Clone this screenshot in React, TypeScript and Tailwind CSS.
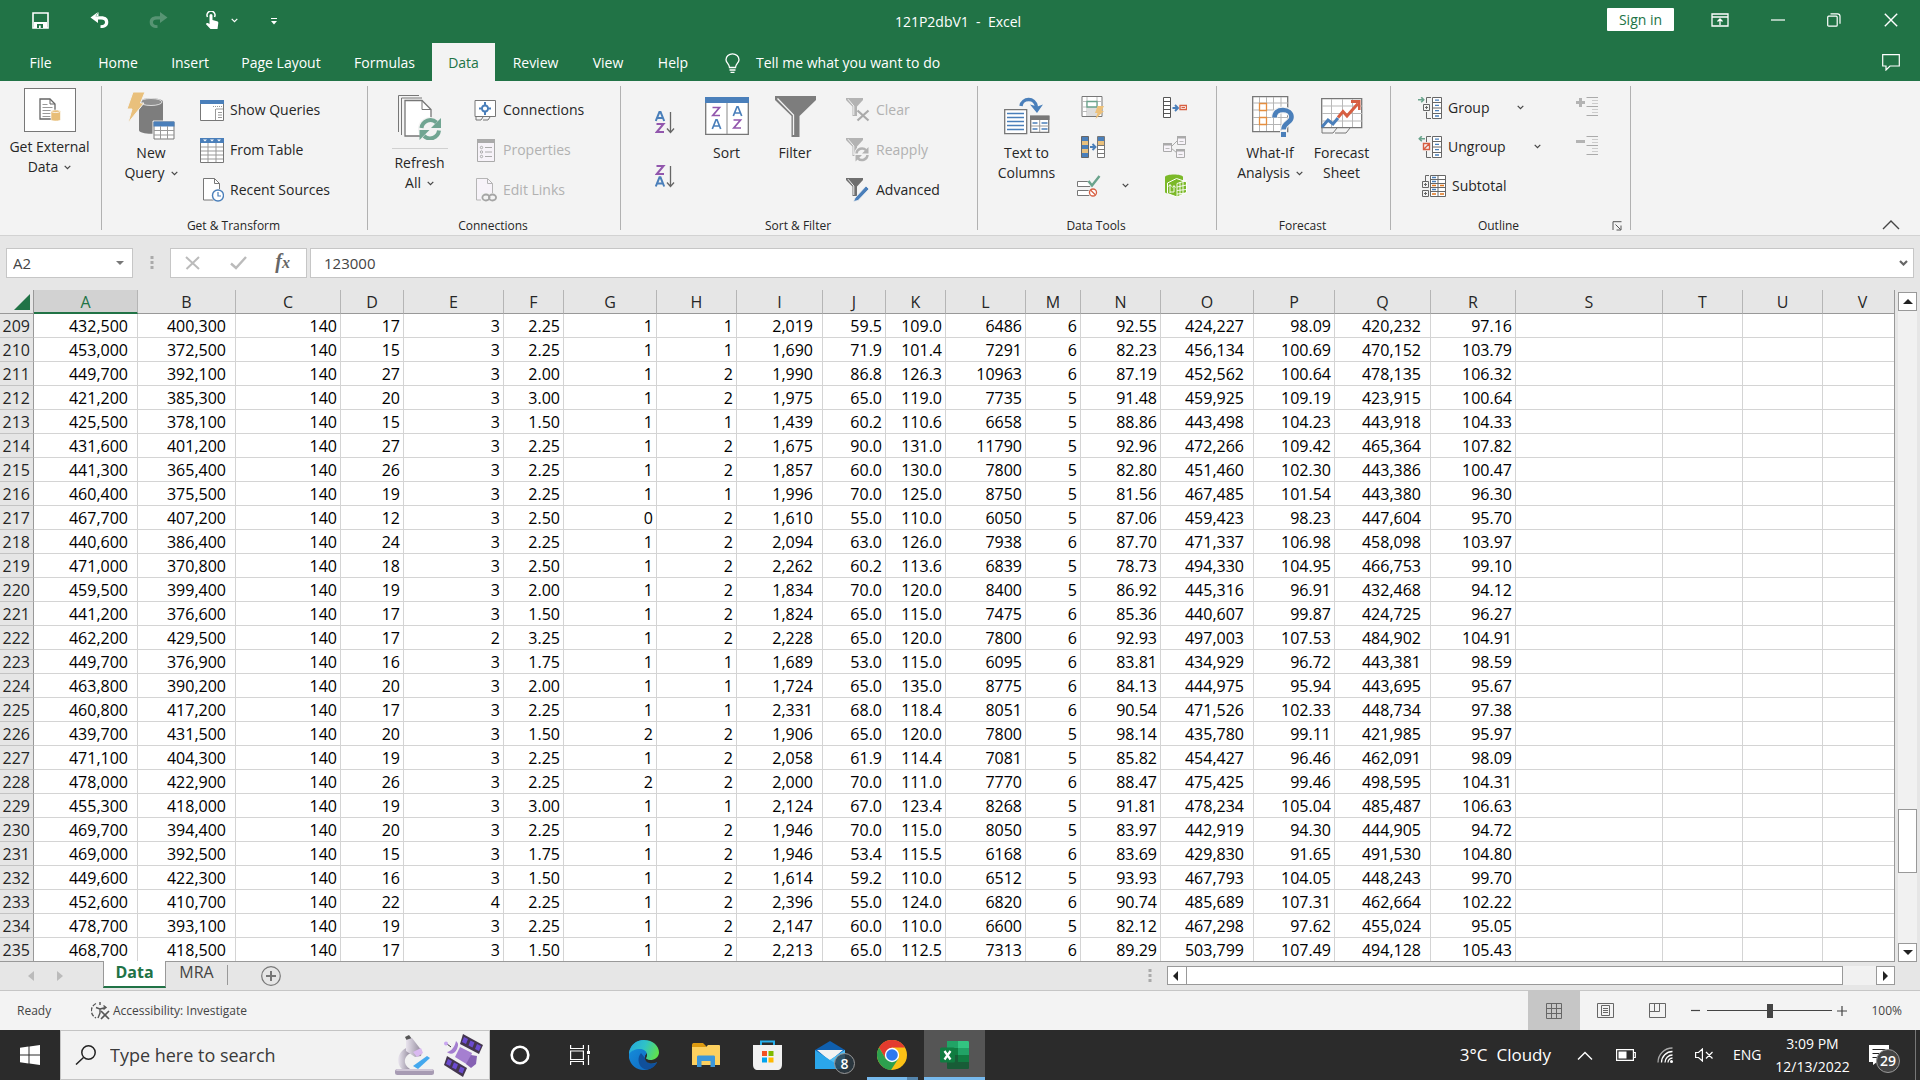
import React from "react";

type Kids = { children?: React.ReactNode };

/* ------------------------------------------------------------------ data */

const COLUMNS: { name: string; width?: number; comma?: boolean }[] = [
  { name: "A", width: 104, comma: true },
  { name: "B", width: 98, comma: true },
  { name: "C", width: 105 },
  { name: "D", width: 63 },
  { name: "E", width: 100 },
  { name: "F", width: 60 },
  { name: "G", width: 93 },
  { name: "H", width: 80 },
  { name: "I", width: 86, comma: true },
  { name: "J", width: 63 },
  { name: "K", width: 60 },
  { name: "L", width: 80 },
  { name: "M", width: 55 },
  { name: "N", width: 80 },
  { name: "O", width: 93, comma: true },
  { name: "P", width: 81 },
  { name: "Q", width: 96, comma: true },
  { name: "R", width: 85 },
  { name: "S", width: 147 },
  { name: "T", width: 80 },
  { name: "U", width: 80 },
  { name: "V" },
];

const ROWS = `209 432,500 400,300 140 17 3 2.25 1 1 2,019 59.5 109.0 6486 6 92.55 424,227 98.09 420,232 97.16
210 453,000 372,500 140 15 3 2.25 1 1 1,690 71.9 101.4 7291 6 82.23 456,134 100.69 470,152 103.79
211 449,700 392,100 140 27 3 2.00 1 2 1,990 86.8 126.3 10963 6 87.19 452,562 100.64 478,135 106.32
212 421,200 385,300 140 20 3 3.00 1 2 1,975 65.0 119.0 7735 5 91.48 459,925 109.19 423,915 100.64
213 425,500 378,100 140 15 3 1.50 1 1 1,439 60.2 110.6 6658 5 88.86 443,498 104.23 443,918 104.33
214 431,600 401,200 140 27 3 2.25 1 2 1,675 90.0 131.0 11790 5 92.96 472,266 109.42 465,364 107.82
215 441,300 365,400 140 26 3 2.25 1 2 1,857 60.0 130.0 7800 5 82.80 451,460 102.30 443,386 100.47
216 460,400 375,500 140 19 3 2.25 1 1 1,996 70.0 125.0 8750 5 81.56 467,485 101.54 443,380 96.30
217 467,700 407,200 140 12 3 2.50 0 2 1,610 55.0 110.0 6050 5 87.06 459,423 98.23 447,604 95.70
218 440,600 386,400 140 24 3 2.25 1 2 2,094 63.0 126.0 7938 6 87.70 471,337 106.98 458,098 103.97
219 471,000 370,800 140 18 3 2.50 1 2 2,262 60.2 113.6 6839 5 78.73 494,330 104.95 466,753 99.10
220 459,500 399,400 140 19 3 2.00 1 2 1,834 70.0 120.0 8400 5 86.92 445,316 96.91 432,468 94.12
221 441,200 376,600 140 17 3 1.50 1 2 1,824 65.0 115.0 7475 6 85.36 440,607 99.87 424,725 96.27
222 462,200 429,500 140 17 2 3.25 1 2 2,228 65.0 120.0 7800 6 92.93 497,003 107.53 484,902 104.91
223 449,700 376,900 140 16 3 1.75 1 1 1,689 53.0 115.0 6095 6 83.81 434,929 96.72 443,381 98.59
224 463,800 390,200 140 20 3 2.00 1 1 1,724 65.0 135.0 8775 6 84.13 444,975 95.94 443,695 95.67
225 460,800 417,200 140 17 3 2.25 1 1 2,331 68.0 118.4 8051 6 90.54 471,526 102.33 448,734 97.38
226 439,700 431,500 140 20 3 1.50 2 2 1,906 65.0 120.0 7800 5 98.14 435,780 99.11 421,985 95.97
227 471,100 404,300 140 19 3 2.25 1 2 2,058 61.9 114.4 7081 5 85.82 454,427 96.46 462,091 98.09
228 478,000 422,900 140 26 3 2.25 2 2 2,000 70.0 111.0 7770 6 88.47 475,425 99.46 498,595 104.31
229 455,300 418,000 140 19 3 3.00 1 1 2,124 67.0 123.4 8268 5 91.81 478,234 105.04 485,487 106.63
230 469,700 394,400 140 20 3 2.25 1 2 1,946 70.0 115.0 8050 5 83.97 442,919 94.30 444,905 94.72
231 469,000 392,500 140 15 3 1.75 1 2 1,946 53.4 115.5 6168 6 83.69 429,830 91.65 491,530 104.80
232 449,600 422,300 140 16 3 1.50 1 2 1,614 59.2 110.0 6512 5 93.93 467,793 104.05 448,243 99.70
233 452,600 410,700 140 22 4 2.25 1 2 2,396 55.0 124.0 6820 6 90.74 485,689 107.31 462,664 102.22
234 478,700 393,100 140 19 3 2.25 1 2 2,147 60.0 110.0 6600 5 82.12 467,298 97.62 455,024 95.05
235 468,700 418,500 140 17 3 1.50 1 2 2,213 65.0 112.5 7313 6 89.29 503,799 107.49 494,128 105.43`
  .split("\n")
  .map((line) => line.split(" "));

/* ----------------------------------------------------------------- icons */

function Svg({ w, h, children }: Kids & { w: number; h: number }) {
  return (
    <svg width={w} height={h} viewBox={`0 0 ${w} ${h}`} fill="none" className="block shrink-0" aria-hidden="true">
      {children}
    </svg>
  );
}

const Chevron = () => (
  <Svg w={7} h={5}>
    <path d="M.7 .8 3.5 3.6 6.3 .8" stroke="#444" strokeWidth="1.2" />
  </Svg>
);

const SaveIcon = () => (
  <Svg w={17} h={17}>
    <path d="M1 1h15v15H1z" stroke="#fff" strokeWidth="1.6" />
    <path d="M2 10h13v6H2z" fill="#fff" />
    <path d="M5 12h6v4H8.700v-2.500H7V16H5z" fill="#217346" />
  </Svg>
);

const UndoIcon = () => (
  <Svg w={19} h={16}>
    <path d="M8 0 0.500 5.500 8 11V7.500h3c3 0 4 1.200 4 2.800 0 1.800-1.300 3-4.500 3V16c5 0 7.800-2 7.800-6 0-3.700-2.700-5.800-7-5.800H5.500z" fill="#fff" />
    <path d="M8.500 0v4H6z" fill="#fff" />
  </Svg>
);

const RedoIcon = () => (
  <Svg w={19} h={16}>
    <path d="M11 0l7.500 5.500L11 11V7.500H8c-3 0-4 1.200-4 2.800 0 1.800 1.300 3 4.500 3V16C3.500 16 .7 14 .7 10c0-3.700 2.700-5.800 7-5.800H11z" fill="#579473" />
  </Svg>
);

const TouchIcon = () => (
  <Svg w={14} h={18}>
    <path d="M2.500 6a4 4 0 1 1 7 0" stroke="#fff" strokeWidth="1.5" />
    <path d="M4.500 4.500a1.500 1.500 0 0 1 3 0V9l4.500 1.200c1 .3 1.500 1 1.300 2L12.500 18H5.500L1 13.200c.2-1.200 1.300-1.600 2.300-.9l1.200.8z" fill="#fff" />
  </Svg>
);

const GetDataIcon = () => (
  <Svg w={22} h={24}>
    <path d="M1 1h10l5 5v15H1z" stroke="#666" strokeWidth="1.3" fill="#fff" />
    <path d="M11 1v5h5" stroke="#666" />
    <path d="M3.500 6.500h5M3.500 9.500h10M3.500 12.500h8M3.500 15.500h8M3.500 18.500h8" stroke="#999" />
    <path d="M12 13.500c0-2 9.500-2 9.500 0v8c0 2-9.500 2-9.500 0z" fill="#e8be78" stroke="#fff" strokeWidth=".6" />
    <path d="M12.500 13.500c1 1.400 7.500 1.400 8.500 0" stroke="#fff" strokeWidth=".8" />
  </Svg>
);

const NewQueryIcon = () => (
  <Svg w={48} h={48}>
    <path d="M12 10c0-5 24-5 24 0v28c0 5-24 5-24 0z" fill="#7d7d7d" />
    <ellipse cx="24" cy="10" rx="11" ry="3.500" fill="#8f8f8f" stroke="#f3f3f3" strokeWidth=".8" />
    <path d="M6 0h12l-4.500 11H17L1 31l4-14H0z" fill="#e9c07c" stroke="#f3f3f3" />
    <path d="M26 29h22v19H26z" fill="#fff" stroke="#f3f3f3" />
    <path d="M27 30h20v17H27z" stroke="#777" fill="#fff" />
    <path d="M26.500 29.500h21v5h-21z" fill="#4a7fba" />
    <path d="M33.500 34v13M40.500 34v13M27 38.500h20M27 43h20" stroke="#999" />
  </Svg>
);

const ShowQueriesIcon = () => (
  <Svg w={24} h={21}>
    <path d="M.5 .5h23v20H.5z" stroke="#777" fill="#fff" />
    <path d="M0 0h24v4H0z" fill="#4a7fba" />
    <path d="M13 6.500h9" stroke="#999" strokeDasharray="1 1" />
    <path d="M15.500 9v11M16 9h7M18 12.500h4M18 15h4M18 17.500h4" stroke="#999" />
  </Svg>
);

const FromTableIcon = () => (
  <Svg w={24} h={25}>
    <path d="M.5 .5h23v24H.5z" stroke="#777" fill="#fff" />
    <path d="M0 0h24v5H0z" fill="#4a7fba" />
    <path d="M3 1.500h4L5 3.500zM10 1.500h4l-2 2zM17 1.500h4l-2 2z" fill="#fff" />
    <path d="M8 5v19M16 5v19M1 9h22M1 13h22M1 17h22M1 21h22" stroke="#999" />
  </Svg>
);

const RecentIcon = () => (
  <Svg w={24} h={24}>
    <path d="M3.500 .5h11l5 5V22h-16z" stroke="#777" fill="#fff" />
    <path d="M14.500 .5v5h5" stroke="#777" />
    <circle cx="18" cy="17.500" r="6.700" fill="#f3f3f3" />
    <circle cx="18" cy="17.500" r="5.500" fill="#fff" stroke="#4a7fba" strokeWidth="1.400" />
    <path d="M18 14v4h3" stroke="#4a7fba" strokeWidth="1.200" />
  </Svg>
);

const RefreshIcon = () => (
  <Svg w={46} h={46}>
    <path d="M1.500 38V1.500H22M4.500 41V4H25" stroke="#777" />
    <path d="M8 6.500h17l9 9V42H8z" fill="#fff" stroke="#777" strokeWidth="1.300" />
    <path d="M25 6.500v9h9" stroke="#777" />
    <circle cx="33" cy="35" r="12" fill="#f3f3f3" />
    <path d="M24.500 34a9 9 0 0 1 15-5.500" stroke="#71a592" strokeWidth="4" />
    <path d="M44 24v10H34z" fill="#71a592" />
    <path d="M42 36.500a9 9 0 0 1-15 5.500" stroke="#71a592" strokeWidth="4" />
    <path d="M22.500 46V36h10z" fill="#71a592" />
  </Svg>
);

const ConnectionsIcon = () => (
  <Svg w={23} h={21}>
    <path d="M2 16v4h5l2-3M9 20h5l2-3" stroke="#777" />
    <path d="M1 .5h20.500v16H1z" stroke="#777" fill="#fff" />
    <circle cx="11" cy="8.500" r="3" stroke="#4a7fba" strokeWidth="1.800" />
    <path d="M11 2v3.500M11 11.500V15M5 8.500h3.500M13.500 8.500H17" stroke="#4a7fba" strokeWidth="2" />
  </Svg>
);

const PropertiesIcon = () => (
  <Svg w={21} h={23}>
    <path d="M2.500 .5h17v22h-17z" stroke="#aaa" fill="#f7f3f9" />
    <path d="M2 0h18v4H2z" fill="#aaa" />
    <circle cx="6.500" cy="8.500" r="1.200" stroke="#aaa" />
    <circle cx="6.500" cy="13" r="1.200" stroke="#aaa" />
    <circle cx="6.500" cy="17.500" r="1.200" stroke="#aaa" />
    <path d="M10 8.500h7M10 13h7M10 17.500h7" stroke="#aaa" />
  </Svg>
);

const EditLinksIcon = () => (
  <Svg w={23} h={24}>
    <path d="M2.500 .5h11l5 5V22h-16z" stroke="#b5b5b5" fill="#f7f3f9" />
    <path d="M13.500 .5v5h5" stroke="#b5b5b5" />
    <path d="M7 15h16v9H7z" fill="#f3f3f3" />
    <ellipse cx="12" cy="19.500" rx="3.600" ry="3" stroke="#a5a5a5" strokeWidth="1.800" />
    <ellipse cx="18.500" cy="19.500" rx="3.600" ry="3" stroke="#a5a5a5" strokeWidth="1.800" />
  </Svg>
);

const LetterA = ({ x, y, color = "#4a7fba", w = 2 }: { x: number; y: number; color?: string; w?: number }) => (
  <g transform={`translate(${x} ${y})`} stroke={color} strokeWidth={w}>
    <path d="M.8 10 4.500 .8h1L9.200 10M2.300 7h5.400" />
  </g>
);
const LetterZ = ({ x, y, color = "#9257ad", w = 2 }: { x: number; y: number; color?: string; w?: number }) => (
  <g transform={`translate(${x} ${y})`} stroke={color} strokeWidth={w}>
    <path d="M1 1h7L1.300 9H8.500" />
  </g>
);
const SortAZIcon = () => (
  <Svg w={20} h={23}>
    <LetterA x={0} y={0} />
    <LetterZ x={0.5} y={12} />
    <path d="M15.500 1v20M12 17.500l3.500 4 3.500-4" stroke="#666" strokeWidth="1.300" />
  </Svg>
);
const SortZAIcon = () => (
  <Svg w={20} h={23}>
    <LetterZ x={0.5} y={0} />
    <LetterA x={0} y={11.5} />
    <path d="M15.500 1v20M12 17.500l3.500 4 3.500-4" stroke="#666" strokeWidth="1.300" />
  </Svg>
);
const SortIcon = () => (
  <Svg w={44} h={38}>
    <path d="M.7 .7h42.600v36.600H.7z" fill="#fff" stroke="#777" strokeWidth="1.300" />
    <path d="M0 0h44v6H0z" fill="#4a7fba" />
    <path d="M22 6v31" stroke="#888" />
    <LetterZ x={6.5} y={9.5} w={1.7} />
    <LetterA x={6.5} y={22} w={1.7} />
    <LetterA x={27.5} y={9} w={1.7} />
    <LetterZ x={27.5} y={22} w={1.7} />
  </Svg>
);
const FilterIcon = () => (
  <Svg w={41} h={41}>
    <path d="M0 0h41v4L24.500 20v21h-8V20L0 4z" fill="#7d7d7d" />
    <path d="M2.500 2.500 18.500 19v20" stroke="#f3f3f3" strokeWidth="1.300" />
  </Svg>
);
const SmallFunnel = ({ color }: { color: string }) => (
  <>
    <path d="M0 0h17v2L11 8.500V18H6.500V8.500L0 2z" fill={color} />
    <path d="M2 1.200 7.800 8v9" stroke="#f3f3f3" />
  </>
);
const ClearIcon = () => (
  <Svg w={24} h={24}>
    <SmallFunnel color="#b3b3b3" />
    <path d="m11.500 12.500 11 10M22.500 12.500l-11 10" stroke="#aaa" strokeWidth="2.200" />
  </Svg>
);
const ReapplyIcon = () => (
  <Svg w={24} h={24}>
    <SmallFunnel color="#b3b3b3" />
    <circle cx="16" cy="16" r="7.800" fill="#f3f3f3" />
    <path d="M10.500 15.500a5.500 5.500 0 0 1 9.500-3.300M21.500 17a5.500 5.500 0 0 1-9.500 3.300" stroke="#b3b3b3" strokeWidth="2.500" />
    <path d="M22.500 9v6.500H16zM9.500 23.500V17H16z" fill="#b3b3b3" />
  </Svg>
);
const AdvancedIcon = () => (
  <Svg w={24} h={24}>
    <SmallFunnel color="#6f6f6f" />
    <path d="m9 20 11-12 3 3L12 22.500l-4.500 1z" fill="#4a7fba" stroke="#f3f3f3" strokeWidth=".8" />
  </Svg>
);

const TextToColumnsIcon = () => (
  <Svg w={46} h={38}>
    <path d="M.7 12.700h22v24H.7z" fill="#fff" stroke="#777" strokeWidth="1.300" />
    <path d="M3 16.500h17M3 20.500h17M3 24.500h17M3 28.500h17M3 32.500h17" stroke="#4a7fba" strokeWidth="1.300" />
    <path d="M26.700 19.500h18v15.800h-18z" fill="#fff" stroke="#777" strokeWidth="1.300" />
    <path d="M26 18.500h19.500V23H26z" fill="#777" />
    <path d="M35.700 23v12M27 29h18" stroke="#999" />
    <path d="M28.500 26h5M37.500 26h6M28.500 32h5M37.500 32h6" stroke="#4a7fba" strokeWidth="1.300" />
    <path d="M17 9c1-8 14-9.500 15.500 1" stroke="#4a7fba" strokeWidth="3.400" />
    <path d="M26 7.500 33 16l6-8.500-5.500 2z" fill="#4a7fba" />
  </Svg>
);
const FlashFillIcon = () => (
  <Svg w={24} h={23}>
    <path d="M1 .5h20v20H1z" fill="#fff" stroke="#777" />
    <path d="M6 1v19M16 1v19M1 5.500h20M1 11h20M1 15.500h20" stroke="#bbb" />
    <path d="M6 12h9v8H6z" fill="#ddd" />
    <path d="M6 5.500h10V11H6z" fill="#fff" stroke="#6aa38c" strokeWidth="1.300" />
    <path d="M16.500 10H23l-2.500 5H23l-8.500 8 2-6h-2.500z" fill="#edc17a" />
  </Svg>
);
const RemoveDupIcon = () => (
  <Svg w={24} h={22}>
    <path d="M.5 .5h7v21h-7z" fill="#4a7fba" stroke="#666" />
    <path d="M1 5h6v4H1zM1 13h6v4H1z" fill="#e9c07c" />
    <path d="M16.500 .5h7v21h-7z" fill="#fff" stroke="#777" />
    <path d="M17 1h6v4h-6z" fill="#4a7fba" />
    <path d="M17 5h6v4h-6z" fill="#e9c07c" />
    <path d="M17 9.500h6M17 13.500h6M17 17.500h6" stroke="#777" />
    <path d="M9 11h5M11.500 8l3 3-3 3" stroke="#4a7fba" strokeWidth="1.900" />
  </Svg>
);
const ValidationIcon = () => (
  <Svg w={24} h={22}>
    <path d="M.5 6.500h13v5H.5zM.5 15.500h13v5H.5z" fill="#fff" stroke="#777" />
    <path d="m11.500 6 3.500 4.500L22.500 1" stroke="#f3f3f3" strokeWidth="4" />
    <path d="m11.500 6 3.500 4.500L22.500 1" stroke="#6aa38c" strokeWidth="2.400" />
    <circle cx="16" cy="17.500" r="4.800" fill="#f3f3f3" />
    <circle cx="16" cy="17.500" r="3.500" stroke="#d75f42" strokeWidth="1.300" fill="#fff" />
    <path d="m13.500 15 5 5" stroke="#d75f42" strokeWidth="1.300" />
  </Svg>
);
const ConsolidateIcon = () => (
  <Svg w={24} h={21}>
    <path d="M.5 .5h7v20h-7z" fill="#fff" stroke="#555" />
    <path d="M.5 4.500h7M.5 8.500h7M.5 12.500h7M.5 16.500h7" stroke="#555" />
    <path d="M9.500 11h5M12 8l3 3-3 3" stroke="#4a7fba" strokeWidth="1.900" />
    <path d="M17 8.500h6.500v4H17z" fill="#fff" stroke="#d75f42" strokeWidth="1.300" />
    <path d="M18.500 10.500h3.500" stroke="#d75f42" />
  </Svg>
);
const RelationshipsIcon = () => (
  <Svg w={24} h={22}>
    <path d="m8 11 6-6M8 12l6 5" stroke="#aaa" />
    <path d="M.5 7.500h8v8h-8zM14.500 .5h8v8h-8zM13.500 13.500h8v8h-8z" fill="#f7f3f9" stroke="#aaa" />
    <path d="M0 7h9v2.500H0zM14 0h9v2.500h-9zM13 13h9v2.500h-9z" fill="#aaa" />
    <path d="M2.500 12.500h4M16.500 5.500h4M15.500 18.500h4" stroke="#bbb" />
  </Svg>
);
const DataModelIcon = () => (
  <Svg w={22} h={23}>
    <path d="M0 3c0-3.500 18-3.500 18 0v15c0 3-18 3-18 0z" fill="#7bb928" />
    <path d="m2.500 9 9-4.500 10 3.500v10.500L12 23l-9.500-3.500z" fill="#7bb928" stroke="#fff" />
    <path d="m12 9.500 9.500-3M12 13l9.500-2M12 16.500l9.500-1M12 20l9.500-1M15 8v13M18 7v13M12 9.500V23M5 11v8M5 18h4v-6M3.500 12.500 5 10.500l1.500 2M7.500 13.500 9 11.500l1.500 2" stroke="#fff" strokeWidth=".9" />
  </Svg>
);

const WhatIfIcon = () => (
  <Svg w={43} h={41}>
    <path d="M.7 .7h35v35h-35z" fill="#fff" stroke="#777" strokeWidth="1.300" />
    <path d="M7.500 1v34M14.500 1v34M21.500 1v34M29 1v34M1 7h35M1 14h35M1 21.500h35M1 28.500h35" stroke="#b5b5b5" />
    <path d="M7.500 7.500h7v7h-7zM7.500 21.500h7v7h-7z" stroke="#e58e3f" strokeWidth="1.300" fill="#fff" />
    <path d="M22.500 21.500c0-5 3-7.500 8.500-7.500 5 0 8.500 3 8.500 7 0 6-8 5.500-8 12" stroke="#f3f3f3" strokeWidth="7" />
    <path d="M28 34.500h7V41h-7z" fill="#f3f3f3" />
    <path d="M22.500 21.500c0-5 3-7.500 8.500-7.500 5 0 8.500 3 8.500 7 0 6-8 5.500-8 12.500" stroke="#4a7fba" strokeWidth="4.600" />
    <path d="M29 36h5v5h-5z" fill="#4a7fba" />
  </Svg>
);
const ForecastIcon = () => (
  <Svg w={42} h={36}>
    <path d="M1 30v5h11l4-5M14 35h11l4-5" stroke="#777" />
    <path d="M.7 .7h40v29h-40z" fill="#fff" stroke="#777" strokeWidth="1.300" />
    <path d="M10.500 1v28M21.500 1v28M31.500 1v28M1 8h40M1 15.500h40M1 23h40" stroke="#b9b9b9" />
    <path d="m1 29 6-7 5 4 5-6" stroke="#4a7fba" strokeWidth="3" />
    <path d="m17 19.500 5-6 4 4.500L37 5.500" stroke="#d75f42" strokeWidth="3" />
    <path d="M30 2h9.500v10h-2.500V5H30z" fill="#d75f42" />
  </Svg>
);

const OutlineIcon = ({ ungroup }: { ungroup?: boolean }) => (
  <Svg w={24} h={22}>
    <path d="M14.500 .5h9v21h-9z" fill="#fff" stroke="#666" />
    <path d="M14.500 5.500h9M14.500 11h9M14.500 16.500h9" stroke="#666" />
    <path d="M17 3.200h4M17 8.300h4M17 13.700h4M17 19h4" stroke="#4a7fba" strokeWidth="1.300" />
    <path d="M13 .5H8.500V6M8.500 15v6.500H13" stroke="#666" />
    {ungroup ? (
      <>
        <path d="M5.500 7.500h6v6h-6zM6 13l5-5" stroke="#d75f42" strokeWidth="1.400" />
        <path d="M7 2.700H1.500M3.800 .2 1.300 2.700l2.500 2.500" stroke="#6aa38c" strokeWidth="1.600" />
      </>
    ) : (
      <>
        <path d="M5.500 7.500h6v6h-6zM8.500 9v3M7 10.500h3" stroke="#666" />
        <path d="M0 2.700h5.500M3.200 .2l2.500 2.500-2.500 2.500" stroke="#6aa38c" strokeWidth="1.600" />
      </>
    )}
  </Svg>
);
const SubtotalIcon = () => (
  <Svg w={24} h={22}>
    <path d="M8.500 .5h15v21h-15z" fill="#fff" stroke="#666" />
    <path d="M8.500 4.500h15M8.500 8.500h15M8.500 12.500h15M8.500 16.500h15M16 .5v21" stroke="#666" />
    <path d="M10 2.500h4M10 6.500h4M10 14.500h4" stroke="#4a7fba" strokeWidth="1.300" />
    <path d="M10 10.500h4M18 10.500h4M10 19h4M18 19h4" stroke="#e2761b" strokeWidth="1.300" />
    <path d="M7 .5H3.500V6M.5 6.500h6v6h-6zM3.500 8v3M2 9.500h3M.5 15.500h6v6h-6zM3.500 17v3M2 18.500h3" stroke="#666" />
  </Svg>
);
const DetailIcon = ({ plus }: { plus?: boolean }) => (
  <Svg w={22} h={20}>
    <path d="M10.500 .5H22M10.500 9.500H22M10.500 18.500H22" stroke="#aaa" />
    <path d="M16 3.500h6M16 6.500h6M16 12.500h6M16 15.500h6" stroke="#ccc" />
    <path d="M0 5.500h9" stroke="#b3b3b3" strokeWidth="3" />
    {plus && <path d="M4.500 1v9" stroke="#b3b3b3" strokeWidth="3" />}
  </Svg>
);

/* ---------------------------------------------------------------- ribbon */

function Group({ label, width, launcher, children }: Kids & { label?: string; width: string; launcher?: boolean }) {
  return (
    <>
      <section className={`flex shrink-0 flex-col ${width}`}>
        <div className="flex flex-1">{children}</div>
        <div className={`relative flex h-[19px] items-center justify-center text-xs text-[#262626] ${launcher ? "pr-6" : "pr-0.5"}`}>
          {label}
          {launcher && (
            <button type="button" aria-label="Outline settings" className="absolute right-2">
              <Svg w={10} h={10}>
                <path d="M1 9V.7h8.500M3.500 3.500l5 5M9 4.500V9H4.500" stroke="#555" />
              </Svg>
            </button>
          )}
        </div>
      </section>
      <div className="my-[5px] w-px shrink-0 bg-[#b1b1b1]" />
    </>
  );
}

function BigButton({ icon, lines, width, arrow }: { icon: React.ReactNode; lines: string[]; width: string; arrow?: boolean }) {
  return (
    <button type="button" className={`flex shrink-0 flex-col items-center pt-[11px] ${width}`}>
      <span className="flex h-[51px] items-center pb-[3px]">{icon}</span>
      <Lines lines={lines} arrow={arrow} />
    </button>
  );
}

function Lines({ lines, arrow }: { lines: string[]; arrow?: boolean }) {
  return (
    <>
      {lines.map((line, i) => (
        <span key={line} className="flex h-5 items-center gap-1.5 whitespace-nowrap text-sm">
          {line}
          {arrow && i === lines.length - 1 && <Chevron />}
        </span>
      ))}
    </>
  );
}

function Item({ icon, label, disabled }: { icon: React.ReactNode; label: string; disabled?: boolean }) {
  return (
    <button
      type="button"
      disabled={disabled}
      className="flex h-10 items-center gap-1.5 whitespace-nowrap text-sm text-[#262626] disabled:text-[#b1b1b1]"
    >
      <span className="flex w-6 justify-center">{icon}</span>
      {label}
    </button>
  );
}

function Ribbon() {
  return (
    <div className="flex h-[155px] border-b border-[#d2d2d2] bg-[#f3f3f3] text-[#262626]">
      <Group width="w-[101px]">
        <button type="button" className="flex flex-1 flex-col items-center pr-0.5 pt-[7px]">
          <span className="mb-[5px] flex h-11 w-[52px] items-center justify-center border border-[#777] bg-white">
            <GetDataIcon />
          </span>
          <Lines lines={["Get External", "Data"]} arrow />
        </button>
      </Group>
      <Group label="Get & Transform" width="w-[265px]">
        <BigButton width="w-[98px]" icon={<NewQueryIcon />} lines={["New", "Query"]} arrow />
        <div className="flex flex-col items-start pt-[9px]">
          <Item icon={<ShowQueriesIcon />} label="Show Queries" />
          <Item icon={<FromTableIcon />} label="From Table" />
          <Item icon={<RecentIcon />} label="Recent Sources" />
        </div>
      </Group>
      <Group label="Connections" width="w-[252px]">
        <button type="button" className="flex w-[105px] flex-col items-center pr-0.5 pt-[13px]">
          <RefreshIcon />
          <span className="mb-1 mt-2 h-px w-14 bg-[#d0d0d0]" />
          <Lines lines={["Refresh", "All"]} arrow />
        </button>
        <div className="flex flex-col items-start pt-[9px]">
          <Item icon={<ConnectionsIcon />} label="Connections" />
          <Item icon={<PropertiesIcon />} label="Properties" disabled />
          <Item icon={<EditLinksIcon />} label="Edit Links" disabled />
        </div>
      </Group>
      <Group label="Sort & Filter" width="w-[356px]">
        <div className="flex w-[72px] flex-col items-end gap-[31px] pr-[18px] pt-[30px]">
          <button type="button" aria-label="Sort A to Z">
            <SortAZIcon />
          </button>
          <button type="button" aria-label="Sort Z to A">
            <SortZAIcon />
          </button>
        </div>
        <BigButton width="w-[67px]" icon={<SortIcon />} lines={["Sort"]} />
        <BigButton width="w-[70px]" icon={<FilterIcon />} lines={["Filter"]} />
        <div className="flex flex-col items-start pl-4 pt-[9px]">
          <Item icon={<ClearIcon />} label="Clear" disabled />
          <Item icon={<ReapplyIcon />} label="Reapply" disabled />
          <Item icon={<AdvancedIcon />} label="Advanced" />
        </div>
      </Group>
      <Group label="Data Tools" width="w-[238px]">
        <BigButton width="w-[97px]" icon={<TextToColumnsIcon />} lines={["Text to", "Columns"]} />
        <div className="grid flex-1 grid-cols-[24px_28px_34px_24px] content-start items-start pl-0.5 pt-[7px]">
          <button type="button" aria-label="Flash Fill" className="flex h-[39px] items-center pl-1">
            <FlashFillIcon />
          </button>
          <span className="col-span-2" />
          <button type="button" aria-label="Consolidate" className="flex h-[39px] items-center">
            <ConsolidateIcon />
          </button>
          <button type="button" aria-label="Remove Duplicates" className="flex h-[39px] items-center pl-1">
            <RemoveDupIcon />
          </button>
          <span className="col-span-2" />
          <button type="button" aria-label="Relationships" disabled className="flex h-[39px] items-center">
            <RelationshipsIcon />
          </button>
          <button type="button" aria-label="Data Validation" className="flex h-[39px] items-center">
            <ValidationIcon />
          </button>
          <button type="button" aria-label="Data Validation options" className="flex h-[39px] items-center justify-end">
            <Chevron />
          </button>
          <span />
          <button type="button" aria-label="Manage Data Model" className="flex h-[39px] items-center pl-0.5">
            <DataModelIcon />
          </button>
        </div>
      </Group>
      <Group label="Forecast" width="w-[173px]">
        <BigButton
          width="w-[106px]"
          icon={
            <span className="pl-1.5">
              <WhatIfIcon />
            </span>
          }
          lines={["What-If", "Analysis"]}
          arrow
        />
        <BigButton width="w-[37px]" icon={<ForecastIcon />} lines={["Forecast", "Sheet"]} />
      </Group>
      <Group label="Outline" width="w-[239px]" launcher>
        <div className="flex w-[185px] flex-col pl-[27px] pt-[7px]">
          <button type="button" className="flex h-[39px] items-center gap-1.5 text-sm">
            <OutlineIcon />
            Group
            <span className="pl-[22px]">
              <Chevron />
            </span>
          </button>
          <button type="button" className="flex h-[39px] items-center gap-1.5 text-sm">
            <OutlineIcon ungroup />
            Ungroup
            <span className="pl-[22px]">
              <Chevron />
            </span>
          </button>
          <button type="button" className="flex h-[39px] items-center gap-1.5 pl-1 text-sm">
            <SubtotalIcon />
            Subtotal
          </button>
        </div>
        <div className="flex flex-col pt-1.5">
          <button type="button" aria-label="Show Detail" disabled className="flex h-[39px] items-center">
            <DetailIcon plus />
          </button>
          <button type="button" aria-label="Hide Detail" disabled className="flex h-[39px] items-center">
            <DetailIcon />
          </button>
        </div>
      </Group>
      <div className="flex flex-1 items-end justify-end pb-[5px] pr-5">
        <button type="button" aria-label="Collapse the ribbon">
          <Svg w={18} h={10}>
            <path d="m1 9 8-8 8 8" stroke="#444" strokeWidth="1.400" />
          </Svg>
        </button>
      </div>
    </div>
  );
}

/* ---------------------------------------------------------------- header */

const TABS = [
  ["File", "w-[81px]"],
  ["Home", "w-[74px]"],
  ["Insert", "w-[70px]"],
  ["Page Layout", "w-[112px]"],
  ["Formulas", "w-[95px]"],
  ["Data", "w-[63px]"],
  ["Review", "w-[81px]"],
  ["View", "w-[64px]"],
  ["Help", "w-[66px]"],
];

function Header() {
  return (
    <header className="bg-[#217346] text-sm text-white">
      <div className="grid h-[43px] grid-cols-[1fr_auto_1fr]">
        <div className="flex h-10 items-center pl-8">
          <button type="button" aria-label="Save" className="w-[58px]">
            <SaveIcon />
          </button>
          <button type="button" aria-label="Undo" className="w-[59px]">
            <UndoIcon />
          </button>
          <button type="button" aria-label="Redo" disabled className="w-14">
            <RedoIcon />
          </button>
          <button type="button" aria-label="Touch mode" className="flex w-[66px] items-center gap-3">
            <TouchIcon />
            <Svg w={7} h={5}>
              <path d="M.7 .8 3.5 3.6 6.300 .8" stroke="#fff" strokeWidth="1.200" />
            </Svg>
          </button>
          <button type="button" aria-label="Customize toolbar" className="pt-[3px]">
            <Svg w={6} h={7}>
              <path d="M0 .5h6" stroke="#fff" />
              <path d="M0 3h6L3 6.500z" fill="#fff" />
            </Svg>
          </button>
        </div>
        <h1 className="flex h-[43px] items-center whitespace-pre pr-1 text-sm">121P2dbV1{"  -  "}Excel</h1>
        <div className="flex h-[39px] items-center justify-end pr-[22px]">
          <button type="button" className="mr-[37px] h-[23px] w-[67px] rounded-[1px] bg-white text-sm leading-[22px] text-[#217346]">
            Sign in
          </button>
          <button type="button" aria-label="Ribbon display options" className="w-[60px]">
            <Svg w={18} h={14}>
              <path d="M1 1h16v12H1zM1 4h16M9 12V6M6.500 8.500 9 6l2.500 2.500" stroke="#fff" strokeWidth="1.300" />
            </Svg>
          </button>
          <button type="button" aria-label="Minimize" className="w-14">
            <Svg w={14} h={2}>
              <path d="M0 1h14" stroke="#fff" strokeWidth="1.200" />
            </Svg>
          </button>
          <button type="button" aria-label="Restore" className="w-[57px]">
            <Svg w={14} h={14}>
              <rect x=".7" y="3.200" width="9.500" height="10" rx="1" stroke="#fff" strokeWidth="1.200" />
              <path d="M3.500 .8h7c1.500 0 2.500 1 2.500 2.500v7.500" stroke="#fff" strokeWidth="1.200" />
            </Svg>
          </button>
          <button type="button" aria-label="Close">
            <Svg w={14} h={14}>
              <path d="m.8 .8 12.400 12.400M13.200 .8 .8 13.200" stroke="#fff" strokeWidth="1.400" />
            </Svg>
          </button>
        </div>
      </div>
      <div className="flex h-[38px] items-stretch">
        {TABS.map(([name, width]) => (
          <button
            key={name}
            type="button"
            className={`shrink-0 whitespace-nowrap pt-0.5 ${width} ${name === "Data" ? "bg-[#f3f3f3] text-[#217346]" : ""}`}
          >
            {name}
          </button>
        ))}
        <button type="button" className="flex items-center gap-4 pl-[19px] pt-0.5">
          <Svg w={15} h={20}>
            <path d="M4.500 14.500C4.500 11 1 10 1 6.800a6.500 6 0 0 1 13 0c0 3.200-3.500 4.200-3.500 7.700zM4.500 17h6M5.500 19.300h4" stroke="#fff" strokeWidth="1.300" />
          </Svg>
          Tell me what you want to do
        </button>
        <div className="flex flex-1 items-center justify-end pr-5">
          <button type="button" aria-label="Comments">
            <Svg w={18} h={17}>
              <path d="M.7 .7h16.600V12H8l-4 4v-4H.7z" stroke="#fff" strokeWidth="1.200" />
            </Svg>
          </button>
        </div>
      </div>
    </header>
  );
}

const Grip = () => (
  <Svg w={4} h={14}>
    <path d="M.5 0h3v3h-3zM.5 5h3v3h-3zM.5 10h3v3h-3z" fill="#aaa" />
  </Svg>
);

function FormulaBar() {
  return (
    <div className="flex h-[54px] items-center bg-[#e6e6e6] pl-1.5 pr-1.5 text-[15px] text-[#444]">
      <div className="flex h-[30px] w-[127px] items-center border border-[#c6c6c6] bg-white">
        <input aria-label="Name box" defaultValue="A2" className="w-full min-w-0 flex-1 bg-transparent pl-1.5 outline-none" />
        <button type="button" aria-label="Named ranges" className="px-2">
          <Svg w={8} h={4}>
            <path d="M0 0h8L4 4z" fill="#777" />
          </Svg>
        </button>
      </div>
      <div className="flex w-[37px] justify-center">
        <Grip />
      </div>
      <div className="mr-[3px] flex h-[30px] w-[137px] items-center justify-between border border-[#c6c6c6] bg-white px-3.5">
        <button type="button" aria-label="Cancel">
          <Svg w={16} h={14}>
            <path d="m1 1 13 12M14 1 1.500 13" stroke="#bbb" strokeWidth="2" />
          </Svg>
        </button>
        <button type="button" aria-label="Enter">
          <Svg w={17} h={14}>
            <path d="m1 7.500 5 4.500L16 1" stroke="#bbb" strokeWidth="2.400" />
          </Svg>
        </button>
        <button type="button" aria-label="Insert function" className="pr-0.5 font-['Liberation_Serif',serif] text-xl leading-none font-semibold italic text-[#666]">
          f<span className="text-base">x</span>
        </button>
      </div>
      <div className="flex h-[30px] flex-1 items-center border border-[#c6c6c6] bg-white pr-[5px]">
        <input aria-label="Formula" defaultValue="123000" className="w-full min-w-0 flex-1 bg-transparent pl-[13px] outline-none" />
        <button type="button" aria-label="Expand formula bar">
          <Svg w={9} h={6}>
            <path d="m1 1 3.500 3.500L8 1" stroke="#666" strokeWidth="2.200" />
          </Svg>
        </button>
      </div>
    </div>
  );
}

/* ----------------------------------------------------------------- sheet */

function Sheet() {
  return (
    <div className="flex bg-[#e6e6e6]">
      <div className="min-w-0 flex-1 border-r border-[#999]">
        <table className="w-full table-fixed border-separate border-spacing-0 text-base text-black">
          <colgroup>
            <col className="w-[34px]" />
            {COLUMNS.map((c) => (
              <col key={c.name} style={{ width: c.width }} />
            ))}
          </colgroup>
          <thead>
            <tr className="h-6 bg-[#e6e6e6]">
              <th aria-label="Select all" className="h-6 border-b border-r border-[#999] p-0 pr-[3px]">
                <span className="flex justify-end">
                  <Svg w={16} h={16}>
                    <path d="M16 0v16H0z" fill="#217346" />
                  </Svg>
                </span>
              </th>
              {COLUMNS.map((c) => (
                <th
                  key={c.name}
                  scope="col"
                  className={
                    c.name === "A"
                      ? "h-6 border-b-2 border-r border-b-[#217346] border-r-[#b5b5b5] bg-[#d2d2d2] p-0 pt-0.5 font-normal leading-5 text-[#217346]"
                      : "h-6 border-b border-r border-b-[#999] border-r-[#b5b5b5] p-0 pt-0.5 font-normal leading-[21px] text-[#262626] last:border-r-0 last:pl-2"
                  }
                >
                  {c.name}
                </th>
              ))}
            </tr>
          </thead>
          <tbody>
            {ROWS.map((row) => (
              <tr key={row[0]} className="h-6 bg-white">
                <th scope="row" className="h-6 border-b border-r border-b-[#c4c4c4] border-r-[#999] bg-[#e6e6e6] p-0 pr-[3px] pt-0.5 text-right font-normal leading-[21px] text-[#262626]">
                  {row[0]}
                </th>
                {COLUMNS.map((c, i) => (
                  <td
                    key={c.name}
                    className={`h-6 border-b border-r border-[#d4d4d4] p-0 pt-0.5 text-right leading-[21px] last:border-r-0 ${c.comma ? "pr-[9px]" : "pr-[3px]"}`}
                  >
                    {row[i + 1]}
                  </td>
                ))}
              </tr>
            ))}
          </tbody>
        </table>
      </div>
      <div className="flex w-[25px] flex-col px-[3px] pt-0.5">
        <button type="button" aria-label="Scroll up" className="flex h-[19px] items-center justify-center border border-[#999] bg-white">
          <Svg w={10} h={5}>
            <path d="M0 5h10L5 0z" fill="#222" />
          </Svg>
        </button>
        <div className="flex flex-1 flex-col justify-end bg-[#f1f1f1] pb-[70px]">
          <div className="h-16 border border-[#999] bg-white" />
        </div>
        <button type="button" aria-label="Scroll down" className="flex h-[19px] items-center justify-center border border-[#999] bg-white">
          <Svg w={10} h={5}>
            <path d="M0 0h10L5 5z" fill="#222" />
          </Svg>
        </button>
      </div>
    </div>
  );
}

function SheetTabs() {
  return (
    <div className="flex h-[29px] items-stretch border-b border-[#c6c6c6] bg-[#e6e6e6] pr-[25px]">
      <div className="-mt-px flex flex-1 items-start border-t border-[#999]">
        <div className="flex h-[27px] w-[103px] items-center gap-[23px] pl-7">
          <button type="button" aria-label="Previous sheet">
            <Svg w={6} h={10}>
              <path d="M6 0v10L0 5z" fill="#bbb" />
            </Svg>
          </button>
          <button type="button" aria-label="Next sheet">
            <Svg w={6} h={10}>
              <path d="M0 0v10l6-5z" fill="#bbb" />
            </Svg>
          </button>
        </div>
        <button type="button" className="-mt-px h-[27px] w-[63px] border-x border-b-2 border-x-[#999] border-b-[#217346] bg-white pb-1 text-base font-bold leading-5 text-[#217346]">
          Data
        </button>
        <button type="button" className="h-5 w-[61px] text-base leading-5 text-[#444]">
          MRA
        </button>
        <span className="mt-[3px] h-5 w-px bg-[#999]" />
        <button type="button" aria-label="New sheet" className="ml-[33px] mt-1">
          <Svg w={20} h={20}>
            <circle cx="10" cy="10" r="9.300" stroke="#777" strokeWidth="1.200" />
            <path d="M10 5v10M5 10h10" stroke="#777" strokeWidth="2" />
          </Svg>
        </button>
        <div className="ml-auto mr-[15px] mt-[7px]">
          <Grip />
        </div>
        <div className="mt-1 flex h-[19px] w-[728px] bg-[#f1f1f1]">
          <button type="button" aria-label="Scroll left" className="flex w-5 items-center justify-center border border-[#999] bg-white pr-[3px]">
            <Svg w={5} h={10}>
              <path d="M5 0v10L0 5z" fill="#222" />
            </Svg>
          </button>
          <div className="w-[656px] border border-l-0 border-[#999] bg-white" />
          <button type="button" aria-label="Scroll right" className="ml-auto flex w-[19px] items-center justify-center border border-[#999] bg-white">
            <Svg w={5} h={10}>
              <path d="M0 0v10l5-5z" fill="#222" />
            </Svg>
          </button>
        </div>
      </div>
    </div>
  );
}

function StatusBar() {
  return (
    <div className="flex h-[39px] items-center bg-[#f3f3f3] text-xs text-[#444]">
      <span className="w-[91px] pl-[17px]">Ready</span>
      <button type="button" className="flex items-center gap-[3px]">
        <Svg w={19} h={18}>
          <path d="M5 1.500A8 8 0 0 0 5 16" stroke="#555" strokeWidth="1.300" strokeDasharray="4 1.500" />
          <path d="M9 0v3M5 5.500l4 1.500v4l-2 5M9 7l6-1.500M12.500 3.500l2.500 2-2.500 2" stroke="#555" strokeWidth="1.400" />
          <path d="m10 9 8 8M18 9l-8 8" stroke="#555" strokeWidth="1.700" />
        </Svg>
        Accessibility: Investigate
      </button>
      <div className="ml-auto flex h-full items-center">
        <button type="button" aria-label="Normal view" className="flex h-full w-[52px] items-center justify-center bg-[#c6c6c6]">
          <Svg w={16} h={16}>
            <path d="M.5 .5h15v15H.5zM5.500 .5v15M10.500 .5v15M.5 5.500h15M.5 10.500h15" stroke="#666" />
          </Svg>
        </button>
        <button type="button" aria-label="Page layout view" className="flex w-[51px] justify-center">
          <Svg w={17} h={15}>
            <path d="M.5 .5h16v14H.5zM4.500 2.500h8v10h-8zM6 5.500h5M6 7.500h5M6 9.500h5" stroke="#666" />
          </Svg>
        </button>
        <button type="button" aria-label="Page break preview" className="flex w-[52px] justify-center">
          <Svg w={17} h={15}>
            <path d="M.5 .5h16v14H.5zM.5 8.500h10v-8M5.500 .5v8" stroke="#666" />
          </Svg>
        </button>
        <button type="button" aria-label="Zoom out" className="ml-2 w-4">
          <Svg w={9} h={9}>
            <path d="M0 4.500h9" stroke="#444" strokeWidth="1.200" />
          </Svg>
        </button>
        <input
          type="range"
          aria-label="Zoom"
          min={0}
          max={100}
          defaultValue={50}
          className="h-4 w-[125px] appearance-none bg-[linear-gradient(#444,#444)] bg-[length:100%_1px] bg-center bg-no-repeat [&::-webkit-slider-thumb]:h-3.5 [&::-webkit-slider-thumb]:w-1.5 [&::-webkit-slider-thumb]:appearance-none [&::-webkit-slider-thumb]:bg-[#444]"
        />
        <button type="button" aria-label="Zoom in" className="ml-[5px]">
          <Svg w={10} h={10}>
            <path d="M0 5h10M5 0v10" stroke="#444" strokeWidth="1.200" />
          </Svg>
        </button>
        <span className="w-[73px] pr-[18px] text-right">100%</span>
      </div>
    </div>
  );
}

/* --------------------------------------------------------------- taskbar */

const Microscope = () => (
  <Svg w={39} h={40}>
    <defs>
      <linearGradient id="scope" x1="0" x2="1">
        <stop offset="0" stopColor="#e9e4ee" />
        <stop offset="1" stopColor="#8f8799" />
      </linearGradient>
    </defs>
    <path d="M14 12C3 15 0 27 7 34h8c-8-5-6-13 1-16z" fill="url(#scope)" />
    <path d="m18 31 14-10 3 2-12 11z" fill="#44a8ee" />
    <path d="m10 2 4-2 3 4-5 2z" fill="#555" />
    <path d="m11 5 6-2 10 13-1 5-6 1-9-6z" fill="url(#scope)" />
    <path d="m18 17 8-4 2 5-6 4z" fill="#d9b9f0" />
    <rect x="0" y="34" width="39" height="6" rx="2.500" fill="#a79bb3" />
    <rect x="1" y="34" width="37" height="2" rx="1" fill="#cfc6d6" />
  </Svg>
);
const Satellite = () => (
  <Svg w={40} h={43}>
    <path d="m19 0 20 11-4 9-19-10z" fill="#44364f" />
    <path d="m20 3 4 2-2 5-4-2zM26.500 6.500l4 2-2 5-4-2zM33 10l4 2-2 5-4-2z" fill="#6b4bd0" />
    <path d="m3 22 20 12-4 9L0 31z" fill="#44364f" />
    <path d="m4 25 4 2-2 5-4-2zM10 28.500l4 2-2 5-4-2zM16.500 32.500l4 2-2 5-4-2z" fill="#6b4bd0" />
    <path d="m16 13 12 6-4 12-13-8z" fill="#a57fd0" />
    <path d="m27 21 6 1-1 8-5 4-5-4z" fill="#8661b3" />
    <path d="M12 7c-1 5-4 10-9 11 3 3 8 2 10-3s1-6-1-8z" fill="#a57fd0" />
    <path d="M7 13 3 10" stroke="#333" />
    <circle cx="2" cy="9.500" r="2" fill="#c9a6f0" />
  </Svg>
);
const EdgeIcon = () => (
  <Svg w={30} h={30}>
    <defs>
      <linearGradient id="edgeTop" x1="0" x2="1" y1=".2" y2=".5">
        <stop offset="0" stopColor="#25a8dc" />
        <stop offset=".5" stopColor="#2fc2c8" />
        <stop offset="1" stopColor="#5fe04e" />
      </linearGradient>
      <linearGradient id="edgeLeft" x1="0" x2="1" y2="1">
        <stop offset="0" stopColor="#1693e0" />
        <stop offset="1" stopColor="#0f63bb" />
      </linearGradient>
    </defs>
    <path d="M15 0a15 15 0 1 0 13 22c-3 .5-6 1-9-1l-3-5 3-5z" fill="url(#edgeLeft)" />
    <path d="M12 13c-5 6-2 16 6 16.500 4 0 8-3 10-7-4 3-12 1-12-4.500z" fill="#10509b" />
    <path d="M0 14C1 5 7 0 15 0c9 0 15 6 15 12.500 0 6-8 9.500-13 6.500 0-2 1-2 1-4.500 0-3-3-5.500-7-5.500C6 9 2 11 0 14z" fill="url(#edgeTop)" />
    <path d="M17 18.500c2.500 2.500 7.500 2.500 11.500 .5-1 1.500-1 2.500-1.500 3.500-4 2-10 1-11-3.500-.4-2 .3-3 1.800-4.500.4 1.500-.8 2.500-.8 4z" fill="#2b2b2b" />
  </Svg>
);
const FolderIcon = () => (
  <Svg w={28} h={24}>
    <path d="M0 2c0-1 .5-2 1.500-2H11l3 3v6H0z" fill="#dd9a10" />
    <path d="M0 4h14l2-2h11a1 1 0 0 1 1 1v19H0z" fill="#fcd05f" />
    <path d="M5 24V14c0-1 .5-1.500 1.500-1.500h15c1 0 1.500.5 1.500 1.500v10h-4.500v-6h-9v6z" fill="#3c97da" />
  </Svg>
);
const StoreIcon = () => (
  <Svg w={29} h={30}>
    <path d="M8 6V1.500h13V6" stroke="#27b0ee" strokeWidth="2" />
    <path d="M0 5h29v19c0 4-1.500 6-5 6H5c-3.500 0-5-2-5-6z" fill="#f1f1f1" />
    <path d="M9 11h5v5H9z" fill="#f25022" />
    <path d="M15.500 11h5v5h-5z" fill="#7fba00" />
    <path d="M9 17.500h5v5H9z" fill="#00a4ef" />
    <path d="M15.500 17.500h5v5h-5z" fill="#ffb900" />
  </Svg>
);
const MailIcon = () => (
  <Svg w={30} h={28}>
    <path d="M0 9 15 0l15 9v19H0z" fill="#0f5fae" />
    <path d="M2 9h26L15 20z" fill="#f2f2f2" />
    <path d="m0 9 15 10L30 9v19H0z" fill="#2ba6ea" />
    <path d="M30 9v19L15 19z" fill="#51bdf3" />
  </Svg>
);
const ChromeIcon = () => (
  <Svg w={30} h={30}>
    <circle cx="15" cy="15" r="15" fill="#fbc116" />
    <path d="M15 7.500h13A15 15 0 0 0 2 7.500l6.500 11z" fill="#e33b2e" />
    <path d="M2 7.500A15 15 0 0 0 14 30l7.500-11.500h-13z" fill="#2da04e" />
    <circle cx="15" cy="15" r="7.200" fill="#fff" />
    <circle cx="15" cy="15" r="5.800" fill="#2f79ee" />
  </Svg>
);
const ExcelIcon = () => (
  <Svg w={29} h={28}>
    <path d="M7 0h11v7H7z" fill="#21a366" />
    <path d="M18 0h9.500c1 0 1.500.5 1.500 1.500V7H18z" fill="#33c481" />
    <path d="M7 7h11v7H7z" fill="#107c41" />
    <path d="M18 7h11v7H18z" fill="#21a366" />
    <path d="M18 14h11v7H18z" fill="#107c41" />
    <path d="M7 14h11v7h11v5.500c0 1-.5 1.500-1.500 1.500h-19C7.500 28 7 27.500 7 26.500z" fill="#185c37" />
    <rect x="0" y="6.500" width="15" height="15" rx="1.500" fill="#107c41" />
    <path d="m4.500 10 6 8.500M10.500 10l-6 8.500" stroke="#fff" strokeWidth="2.200" />
  </Svg>
);

function Task({ label, width, children }: Kids & { label: string; width: string }) {
  return (
    <button type="button" aria-label={label} className={`relative flex h-full shrink-0 items-center justify-center ${width}`}>
      {children}
    </button>
  );
}

function Taskbar() {
  return (
    <footer className="flex h-[50px] items-center bg-[#2b2b2b] text-white">
      <Task label="Start" width="w-[60px]">
        <Svg w={20} h={20}>
          <path d="m0 2.700 8.500-1.200V9.500H0zM9.500 1.400 20 0v9.500H9.500zM0 10.500h8.500v8L0 17.300zM9.500 10.500H20V20L9.500 18.600z" fill="#fff" />
        </Svg>
      </Task>
      <div className="flex h-full w-[430px] shrink-0 items-center border border-[#c4c4c4] bg-[#f2f2f2] pl-3.5 pr-[5px]">
        <Svg w={21} h={20}>
          <circle cx="13.500" cy="7.500" r="6.700" stroke="#222" strokeWidth="1.500" />
          <path d="M8.500 12.500 1 19.500" stroke="#222" strokeWidth="1.500" />
        </Svg>
        <input
          aria-label="Search"
          placeholder="Type here to search"
          className="ml-3.5 min-w-0 flex-1 bg-transparent text-lg outline-none placeholder:text-[#3a3a3a]"
        />
        <Microscope />
        <span className="w-2.5" />
        <Satellite />
      </div>
      <Task label="Cortana" width="w-[60px]">
        <Svg w={20} h={20}>
          <circle cx="10" cy="10" r="8.300" stroke="#fff" strokeWidth="2.600" />
        </Svg>
      </Task>
      <Task label="Task View" width="w-[60px]">
        <Svg w={21} h={20}>
          <path d="M.6 0v3.500h12.800V0M.6 6h12.800v8.500H.6zM.6 20v-3.500h12.800V20M18.500 0v6M18.500 10v10" stroke="#fff" strokeWidth="1.200" />
          <path d="M17 6h3v3h-3z" fill="#fff" />
        </Svg>
      </Task>
      <Task label="Edge" width="w-[68px]">
        <EdgeIcon />
      </Task>
      <Task label="File Explorer" width="w-[56px]">
        <FolderIcon />
      </Task>
      <Task label="Store" width="w-[66px]">
        <StoreIcon />
      </Task>
      <Task label="Mail" width="w-[59px]">
        <MailIcon />
        <span className="absolute bottom-1.5 right-1 flex size-[21px] items-center justify-center rounded-full border border-[#999] bg-[#2b3a44]/80 text-sm font-semibold">8</span>
      </Task>
      <Task label="Chrome" width="w-[65px]">
        <ChromeIcon />
        <span className="absolute bottom-0 left-2 h-[3px] w-10 bg-[#76b9ed]" />
        <span className="absolute bottom-0 left-12 h-[3px] w-[11px] bg-[#5484ab]" />
      </Task>
      <Task label="Excel" width="w-[61px] bg-[#555] border-b-[3px] border-[#76b9ed] pt-[3px]">
        <ExcelIcon />
      </Task>
      <div className="ml-auto flex h-full items-center">
        <button type="button" className="mr-[26px] whitespace-pre text-[17px]">
          3°C{"  "}Cloudy
        </button>
        <button type="button" aria-label="Hidden icons" className="w-[39px]">
          <Svg w={16} h={9}>
            <path d="m1 8.500 7-7 7 7" stroke="#fff" strokeWidth="1.400" />
          </Svg>
        </button>
        <button type="button" aria-label="Battery" className="w-[41px]">
          <Svg w={20} h={12}>
            <path d="M.6 .6h16.800v10.800H.6zM18 3.500h1.300v5H18" stroke="#fff" strokeWidth="1.200" />
            <path d="M2.500 2.500h8v7h-8z" fill="#fff" />
          </Svg>
        </button>
        <button type="button" aria-label="Network" className="w-[38px]">
          <Svg w={16} h={16}>
            <path d="M1 15.500A14.500 14.500 0 0 1 15.500 1" stroke="#aaa" strokeWidth="1.300" />
            <path d="M4.500 15.500a11 11 0 0 1 11-11M8 15.500A7.500 7.500 0 0 1 15.500 8M11 15.500a4.500 4.500 0 0 1 4.500-4.500" stroke="#fff" strokeWidth="1.300" />
            <circle cx="14.500" cy="14.500" r="1.500" fill="#fff" />
          </Svg>
        </button>
        <button type="button" aria-label="Volume muted" className="w-[38px]">
          <Svg w={19} h={14}>
            <path d="M.6 4.500H3.500L7.400 1v12L3.500 9.500H.6zM11 4l6.500 6.500M17.500 4 11 10.500" stroke="#fff" strokeWidth="1.200" />
          </Svg>
        </button>
        <button type="button" className="w-[42px] text-left text-sm">
          ENG
        </button>
        <button type="button" className="w-[75px] whitespace-nowrap text-center text-sm leading-[23px]">
          3:09 PM
          <br />
          12/13/2022
        </button>
        <button type="button" aria-label="29 notifications" className="relative ml-[18px] h-8 w-[34px]">
          <Svg w={22} h={20}>
            <path d="M1 0h20v17H9l-4 3v-3H1z" fill="#fff" />
            <path d="M4.500 4.500h13M4.500 8.500h13M4.500 12.500h9" stroke="#222" strokeWidth="1.200" />
          </Svg>
          <span className="absolute -bottom-0.5 left-[8px] flex size-6 items-center justify-center rounded-full border border-[#999] bg-[#444] text-sm font-semibold">29</span>
        </button>
        <span className="ml-[13px] h-full w-[5px] border-l border-[#777]" />
      </div>
    </footer>
  );
}

export default function App() {
  return (
    <div className="flex min-h-screen flex-col overflow-x-hidden bg-[#f3f3f3] font-['Open_Sans','Noto_Sans',sans-serif]">
      <Header />
      <Ribbon />
      <FormulaBar />
      <Sheet />
      <SheetTabs />
      <StatusBar />
      <Taskbar />
    </div>
  );
}
